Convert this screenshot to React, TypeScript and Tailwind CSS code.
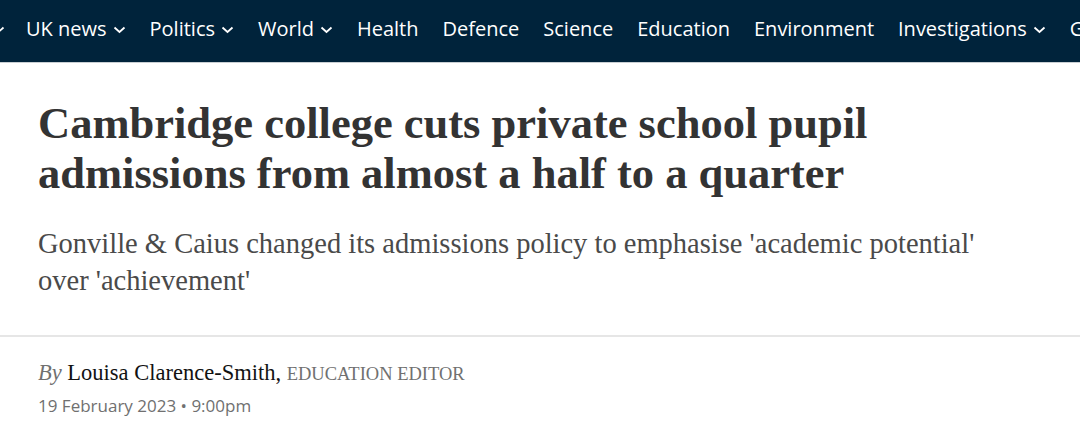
import React from 'react';

const navItems: { label: string; menu: boolean }[] = [
  { label: 'UK news', menu: true },
  { label: 'Politics', menu: true },
  { label: 'World', menu: true },
  { label: 'Health', menu: false },
  { label: 'Defence', menu: false },
  { label: 'Science', menu: false },
  { label: 'Education', menu: false },
  { label: 'Environment', menu: false },
  { label: 'Investigations', menu: true },
  { label: 'Global Health', menu: false },
];

const Chevron = () => (
  <svg width="13" height="8" viewBox="0 0 13 8" fill="none" className="ml-[6px] mt-[2px]">
    <path d="M1.5 1.5 L6.5 6 L11.5 1.5" stroke="white" strokeWidth="1.8" />
  </svg>
);

export default function App() {
  return (
    <div className="w-[1080px] h-[435px] bg-white overflow-hidden">
      {/* Section nav */}
      <nav className="h-[63px] pb-[4px] bg-[#00233b] border-b border-[#c9cfd3] flex items-center overflow-hidden whitespace-nowrap font-['Open_Sans',sans-serif] text-[20px] text-white">
        <div className="flex items-center -ml-[8px] shrink-0">
          <svg width="13" height="8" viewBox="0 0 13 8" fill="none" className="mt-[2px]">
            <path d="M1.5 1.5 L6.5 6 L11.5 1.5" stroke="white" strokeWidth="1.8" />
          </svg>
        </div>
        <ul className="flex items-center gap-[24px] ml-[21px]">
          {navItems.map((item) => (
            <li key={item.label} className="flex items-center shrink-0">
              <span>{item.label}</span>
              {item.menu && <Chevron />}
            </li>
          ))}
        </ul>
      </nav>

      {/* Article header */}
      <header className="px-[38px] pt-[35px] pb-[36px] font-['Liberation_Serif',serif]">
        <h1 className="text-[44.5px] leading-[50px] font-bold text-[#333333] max-w-[900px]">
          Cambridge college cuts private school pupil admissions from almost a half to a quarter
        </h1>
        <p className="mt-[27px] text-[28.5px] leading-[37px] text-[#4a4a4a] max-w-[960px]">
          Gonville &amp; Caius changed its admissions policy to emphasise 'academic potential' over 'achievement'
        </p>
      </header>

      <div className="h-[2px] bg-[#e6e6e6]" />

      {/* Byline */}
      <div className="px-[38px] pt-[22px]">
        <p className="font-['Liberation_Serif',serif] text-[22.5px] leading-[28px] text-[#121212]">
          <span className="italic text-[#707070]">By</span> Louisa Clarence-Smith,{' '}
          <span className="uppercase text-[18.5px] text-[#707070]">Education editor</span>
        </p>
        <p className="mt-[6px] font-['Open_Sans',sans-serif] text-[17px] leading-[24px] text-[#707070]">
          19 February 2023 • 9:00pm
        </p>
      </div>
    </div>
  );
}
